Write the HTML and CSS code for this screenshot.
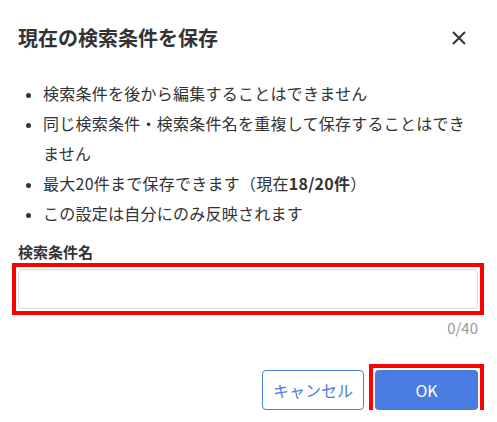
FILE: index.html
```html
<!DOCTYPE html>
<html lang="ja">
<head>
  <meta charset="UTF-8">
  <title>現在の検索条件を保存</title>
  <link rel="stylesheet" href="styles.css">
</head>
<body>
  <div class="dialog">
    <div class="dialog-header">
      <h2>現在の検索条件を保存</h2>
      <button class="close-btn" aria-label="閉じる">
        <svg width="14" height="14" viewBox="0 0 14 14">
          <path d="M1 1L13 13M13 1L1 13" stroke="#333" stroke-width="2" fill="none"/>
        </svg>
      </button>
    </div>

    <ul class="notes">
      <li>検索条件を後から編集することはできません</li>
      <li>同じ検索条件・検索条件名を重複して保存することはできません</li>
      <li>最大20件まで保存できます（現在<b>18/20件</b>）</li>
      <li>この設定は自分にのみ反映されます</li>
    </ul>

    <label class="field-label" for="name">検索条件名</label>
    <div class="highlight highlight-input">
      <input class="field-input" id="name" type="text">
    </div>
    <div class="counter">0/40</div>

    <div class="buttons">
      <button class="btn btn-cancel">キャンセル</button>
      <div class="highlight highlight-ok">
        <button class="btn btn-ok">OK</button>
      </div>
    </div>
  </div>
</body>
</html>
```

FILE: styles.css
```css
* {
  box-sizing: border-box;
}

body {
  margin: 0;
  background: white;
  color: #333;
  font-family: "Noto Sans CJK JP", "Noto Sans", sans-serif;
}

.dialog {
  padding: 24px 19px 0 18px;
}

.dialog-header {
  display: flex;
  justify-content: space-between;
  align-items: center;
  height: 28px;
}

.dialog-header h2 {
  margin: 0;
  font-size: 20px;
  line-height: 28px;
  font-weight: bold;
}

.close-btn {
  width: 14px;
  height: 14px;
  padding: 0;
  margin-right: 12px;
  border: none;
  background: none;
  display: flex;
  cursor: pointer;
}

.notes {
  margin: 26px 0 0;
  padding-left: 25px;
  font-size: 16px;
  line-height: 30px;
  letter-spacing: 0.25px;
}

.notes li::marker {
  font-size: 14px;
}

.field-label {
  display: block;
  margin-top: 13px;
  font-size: 15px;
  line-height: 22px;
  font-weight: bold;
}

/* red annotation frame */
.highlight {
  border: 4px solid #ff0000;
  padding: 2px;
}

.highlight-input {
  margin: 0 -6px;
}

.highlight-ok {
  margin: -6px -6px -6px -6px;
}

.field-input {
  display: block;
  width: 100%;
  height: 40px;
  border: 1px solid #ddd;
  border-radius: 4px;
}

.counter {
  margin-top: 3px;
  text-align: right;
  font-size: 15px;
  line-height: 20px;
  color: #999;
}

.buttons {
  display: flex;
  justify-content: flex-end;
  gap: 11px;
  margin-top: 32px;
}

.btn {
  display: block;
  height: 40px;
  font-family: inherit;
  font-size: 16px;
  border-radius: 4px;
  cursor: pointer;
}

.btn-cancel {
  width: 102px;
  background: white;
  color: #4a7de2;
  border: 1px solid #4a7de2;
}

.btn-ok {
  width: 103px;
  background: #4a7de2;
  color: white;
  border: none;
}
```
